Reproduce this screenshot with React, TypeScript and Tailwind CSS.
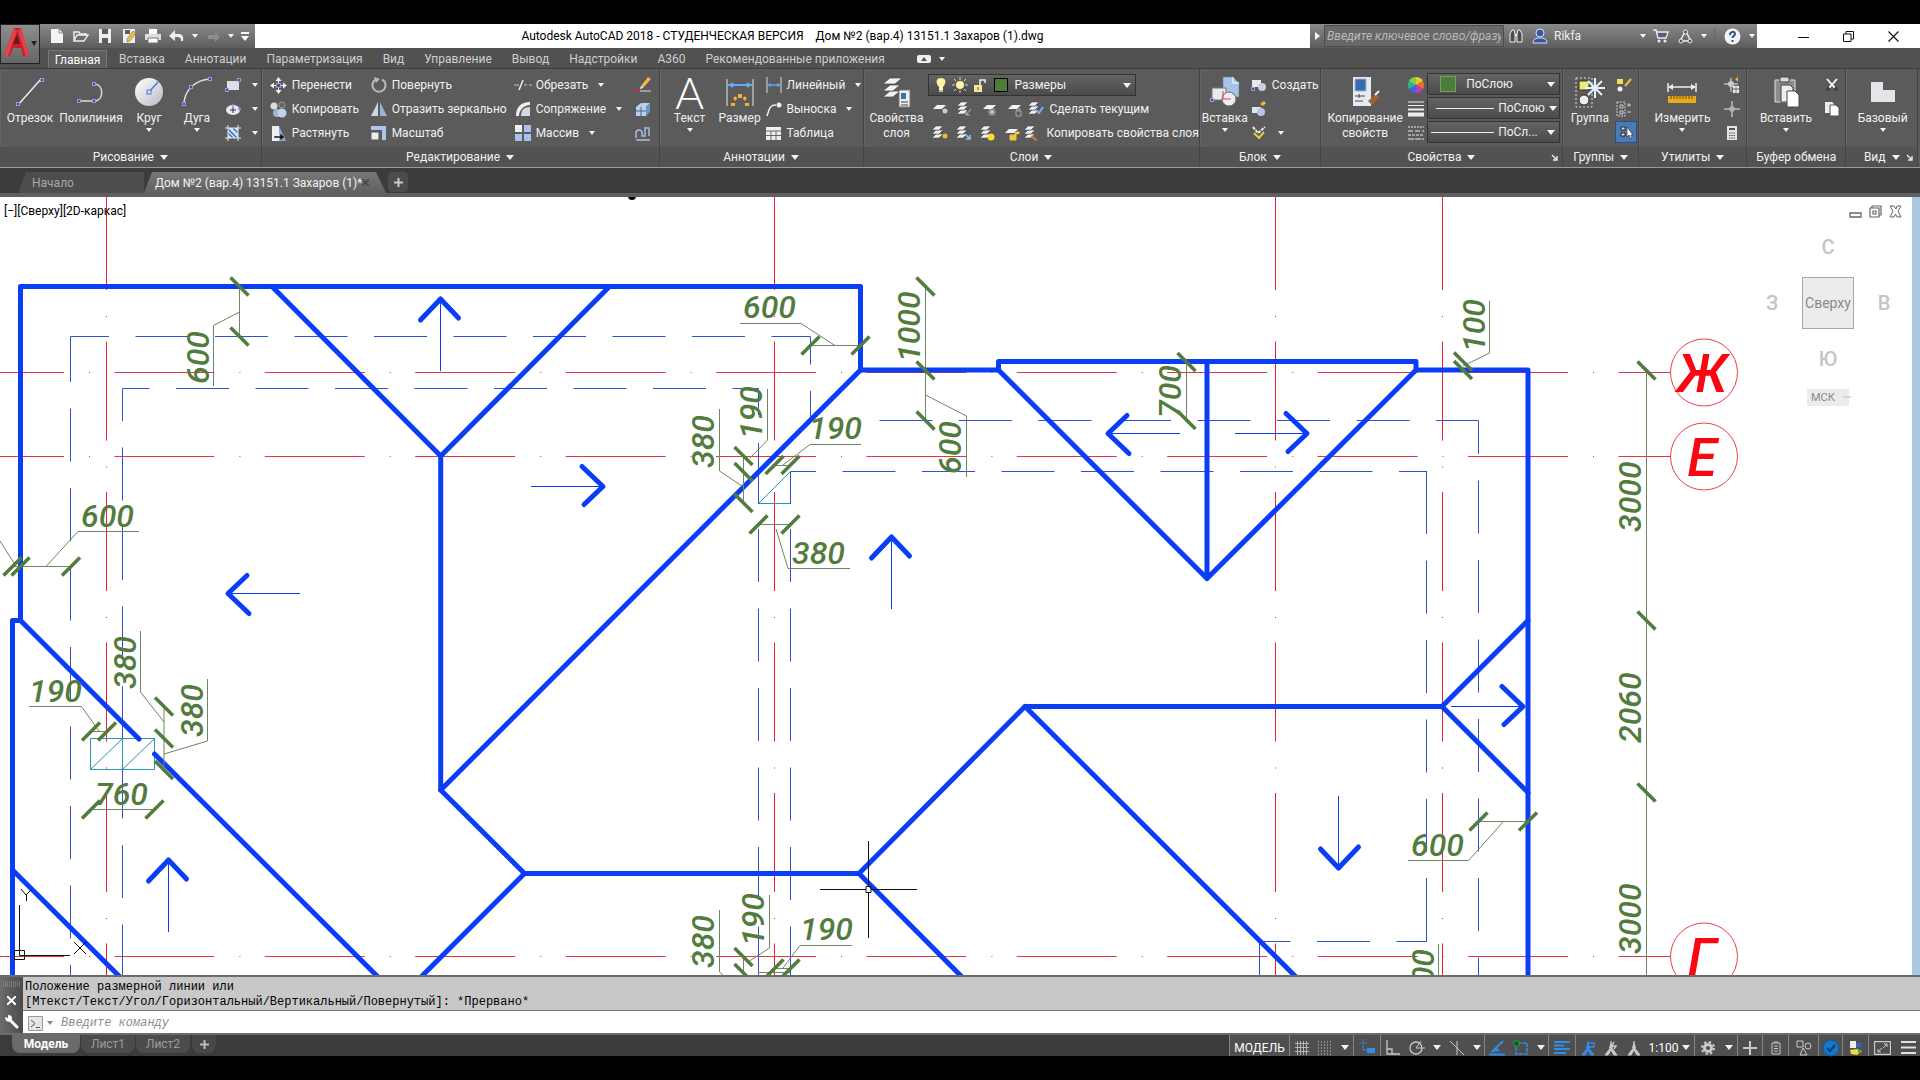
import type { ReactNode } from "react";
import clsx from "clsx";

type Kids = { children?: ReactNode };

/* ---------- small helpers ---------- */

function Svg({ w = 18, h = w, box, children }: Kids & { w?: number; h?: number; box?: string }) {
  return (
    <svg width={w} height={h} viewBox={box ?? `0 0 ${w} ${h}`} fill="none" className="shrink-0" aria-hidden="true">
      {children}
    </svg>
  );
}

function Caret({ big }: { big?: boolean }) {
  return big ? (
    <Svg w={8} h={5}><path d="M0 0h8L4 5z" fill="#f4f4f4" /></Svg>
  ) : (
    <Svg w={6} h={4}><path d="M0 0h6L3 4z" fill="#f4f4f4" /></Svg>
  );
}

function Node({ x, y }: { x: number; y: number }) {
  return <rect x={x - 1.5} y={y - 1.5} width="3" height="3" fill="#4a4f66" stroke="#8f9df0" />;
}

function Stack({ x = 0, y = 0, c = "#f2f2f2" }: { x?: number; y?: number; c?: string }) {
  return (
    <g transform={`translate(${x} ${y})`} fill={c} stroke="#4a4a4a" strokeWidth=".6">
      <path d="M1 13l4-4h7l-4 4z" />
      <path d="M1 9l4-4h7l-4 4z" />
      <path d="M1 5l4-4h7L8 5z" />
    </g>
  );
}

/* ---------- ribbon building blocks ---------- */

function Panel({ title, className, launcher, plain, children }: Kids & { title: string; className: string; launcher?: boolean; plain?: boolean }) {
  return (
    <section className={clsx("flex min-w-0 flex-col overflow-hidden border-r border-[#444] shadow-[inset_1px_0_0_#666]", className)}>
      <div className="flex h-[79px] pt-1 pl-[2px]">{children}</div>
      <button className="relative flex h-5 w-full items-center justify-center gap-[6px] bg-[#525252] whitespace-nowrap">
        {title}
        {!plain && <Caret big />}
        {launcher && (
          <span className="absolute right-1">
            <Svg w={7}><path d="M1 1l4 4M6 2v4H2" stroke="#eee" strokeWidth="1.4" /></Svg>
          </span>
        )}
      </button>
    </section>
  );
}

function Big({ icon, label, w, caret }: { icon: ReactNode; label: string; w: string; caret?: boolean }) {
  return (
    <button className={clsx("flex shrink-0 flex-col items-center", w)}>
      <span className="flex h-[38px] items-center">{icon}</span>
      <span className="text-center leading-[15px] whitespace-pre-line">{label}</span>
      {caret && <span className="pt-[2px]"><Caret /></span>}
    </button>
  );
}

function Col({ className, children }: Kids & { className?: string }) {
  return <div className={clsx("flex shrink-0 flex-col", className)}>{children}</div>;
}

function Row({ icon, label, caret }: { icon: ReactNode; label?: string; caret?: boolean }) {
  return (
    <button aria-label={label ?? "Инструмент"} className="flex h-6 items-center gap-1 whitespace-nowrap">
      <span className="flex w-[18px] justify-center">{icon}</span>
      {label && <span>{label}</span>}
      {caret && <span className="pl-[6px]"><Caret /></span>}
    </button>
  );
}

/* ---------- icons ---------- */

const lineIcon = <Svg w={30}><path d="M3 28L26 2" stroke="#eee" strokeWidth="1.5" /><Node x={3} y={27} /><Node x={27} y={3} /></Svg>;
const plineIcon = <Svg w={32}><path d="M4 25h16c9-1 9-16 0-17" stroke="#ddd" strokeWidth="1.5" /><Node x={4} y={25} /><Node x={19} y={25} /><Node x={19} y={8} /></Svg>;
const circleIcon = (
  <Svg w={30}>
    <defs><linearGradient id="disc" x1="0" y1="0" x2="1" y2="1"><stop stopColor="#fff" /><stop offset="1" stopColor="#b9bcc4" /></linearGradient></defs>
    <circle cx="15" cy="15" r="14" fill="url(#disc)" />
    <path d="M15 15l9-10" stroke="#4a7be0" strokeWidth="1.5" />
    <rect x="13" y="13" width="4" height="4" fill="#dde" stroke="#5570d8" />
  </Svg>
);
const arcIcon = <Svg w={32}><path d="M3 29C3 14 14 4 29 3" stroke="#ddd" strokeWidth="1.5" /><Node x={3} y={28} /><Node x={10} y={11} /><Node x={29} y={3} /></Svg>;
const rectIcon = <Svg w={16}><rect x="2" y="4" width="12" height="9" fill="#dcdfe8" /><Node x={2} y={13} /><Node x={14} y={3} /></Svg>;
const ellipseIcon = <Svg w={16}><ellipse cx="8" cy="9" rx="7" ry="5" fill="#e8eaf0" /><path d="M5 9h6M8 6v6" stroke="#333" /><circle cx="8" cy="4" r="1.5" fill="#88f" /><circle cx="14.500" cy="8" r="1.500" fill="#88f" /></Svg>;
const hatchIcon = <Svg w={16}><rect x="3" y="3" width="10" height="10" fill="#cfe3ff" /><path d="M3 8l5 5M3 4l9 9M8 3l5 5" stroke="#2a63b8" strokeWidth="1.2" /><path d="M3 0v16M13 0v16M0 3h16M0 13h16" stroke="#e8e8e8" /></Svg>;
const moveIcon = <Svg w={17}><path d="M8.500 0l3 4h-6zM8.500 17l3-4h-6zM0 8.500l4-3v6zM17 8.500l-4-3v6z" fill="#f2f2f2" /><path d="M8.500 4v9M4 8.500h9" stroke="#f2f2f2" /><rect x="6.500" y="6.500" width="4" height="4" fill="#556" stroke="#8f9df0" /></Svg>;
const copyIcon = <Svg w={17}><circle cx="4" cy="5" r="3.500" fill="#ddd" /><circle cx="12" cy="4" r="3" fill="#666" stroke="#999" /><circle cx="7" cy="12" r="4" fill="#aab4c8" /><circle cx="12" cy="12" r="4.500" fill="#bcd3ef" /></Svg>;
const stretchIcon = <Svg w={17}><path d="M2 1h7v15H2z" fill="#eee" /><path d="M9 1l7 15H9z" fill="#7fa8dd" /><path d="M4 11h6V8l5 4-5 4v-3H4z" fill="#111" stroke="#eee" strokeWidth=".5" /></Svg>;
const rotateIcon = <Svg w={16}><path d="M5 2.500A6.500 6.500 0 1 0 11 2.500" stroke="#b8b8b8" strokeWidth="2" /><path d="M3 0l6 2-4 4z" fill="#b8b8b8" /></Svg>;
const mirrorIcon = <Svg w={16}><path d="M7 1v14H0z" fill="#cfd5de" /><path d="M9 1v14h7z" fill="#98b3d8" /></Svg>;
const scaleIcon = <Svg w={16}><path d="M0 1h15v14h-4V5H0z" fill="#a9c6ee" /><path d="M0 7h8v8H0z" fill="#eee" stroke="#555" /></Svg>;
const trimIcon = <Svg w={18}><path d="M0 9h5M10 9h3M15 9h3" stroke="#b8c6da" /><path d="M5 14L9 4" stroke="#eee" strokeWidth="1.500" /></Svg>;
const filletIcon = <Svg w={16}><path d="M1 15C1 6 6 1 15 1v3C9 4 4 9 4 15z" fill="#eee" /><path d="M6 15C6 9 9 6 15 6v9z" fill="#d5d8df" /></Svg>;
const arrayIcon = <Svg w={16}><path d="M0 0h7v7H0z" fill="#eee" /><path d="M9 0h7v7H9zM0 9h7v7H0zM9 9h7v7H9z" fill="#a6c1ea" /></Svg>;
const eraseIcon = <Svg w={16}><path d="M6 9l7-9 3 2-8 9z" fill="#f0b840" /><path d="M6 9l2 2-3 1z" fill="#fff" /><path d="M0 14h4" stroke="#d22" strokeWidth="2" /><path d="M5 14h11" stroke="#ddd" /></Svg>;
const explodeIcon = <Svg w={16}><path d="M1 6l5-4h9l-4 4zM1 6h10v9H1z" fill="#b8d0ee" /><path d="M11 6l4-4v9l-4 4z" fill="#6e93c8" /><path d="M6 6v9M1 10h10" stroke="#567" /></Svg>;
const offsetIcon = <Svg w={16}><path d="M1 13V8a3 3 0 0 1 6 0v3h3V3h4v8" stroke="#a9bce0" strokeWidth="1.500" /><path d="M1 15h14" stroke="#eee" /></Svg>;
const textIcon = <span className="font-[Lato,sans-serif] text-[44px] leading-8 font-light text-white">A</span>;
const dimIcon = <Svg w={30}><path d="M2 2v27M28 2v27" stroke="#e5e5e5" /><path d="M3 8h24" stroke="#62aaf4" strokeWidth="2" /><path d="M3 8l5-3v6zM27 8l-5-3v6z" fill="#62aaf4" /><g fill="#f3b13a"><path d="M13 17h4v4h-4z" /><path d="M8 21l3-2 1 3-2 2zM22 21l-3-2-1 3 2 2zM6 26h4v3H6zM20 26h4v3h-4z" /></g></Svg>;
const linearIcon = <Svg w={16}><path d="M1 0v16M15 0v16" stroke="#ddd" /><path d="M2 8h12" stroke="#5da2ee" strokeWidth="1.500" /><path d="M1 8l4-2v4zM15 8l-4-2v4z" fill="#5da2ee" /></Svg>;
const leaderIcon = <Svg w={16}><path d="M1 15l2-6c1-4 3-5 7-5" stroke="#eee" strokeWidth="1.500" /><circle cx="13" cy="4" r="2.500" fill="#eee" /></Svg>;
const tableIcon = <Svg w={15}><path d="M0 1h15v13H0z" fill="#eee" /><path d="M0 5h15M0 9.500h15M5 5v9M10 5v9" stroke="#666" /></Svg>;
const layerPropsIcon = (
  <Svg w={30} h={32}>
    <g fill="#f2f2f2" stroke="#444" strokeWidth=".7"><path d="M1 21l7-6h10l-7 6z" /><path d="M1 15l7-6h10l-7 6z" /><path d="M1 8l7-6h12l-7 6z" /></g>
    <path d="M17 14h11v17H17z" fill="#eee" stroke="#777" />
    <path d="M19 17h5v6h-5z" fill="#3c6fae" /><path d="M19 26h7M19 29h7" stroke="#444" />
  </Svg>
);
const insertIcon = <Svg w={30} h={32}><path d="M13 1h10l6 6v14H13z" fill="#a8c3e8" stroke="#587" strokeWidth=".6" /><path d="M23 1v6h6" stroke="#fff" /><path d="M2 12h14v12H2z" fill="#e9e9ee" stroke="#777" /><circle cx="19" cy="23" r="7" fill="#ececf2" stroke="#667" /><path d="M13 15v8h8" stroke="#d44" /><Node x={2} y={24} /></Svg>;
const matchIcon = <Svg w={30} h={32}><path d="M3 1h18v29H3z" fill="#e6eaf2" /><path d="M5 3h11v12H5z" fill="#3a6cab" stroke="#9bc" /><path d="M5 20h10M9 18v4M5 25h8" stroke="#445" /><path d="M18 25l8-7 3 3-7 8z" fill="#a7632f" /><path d="M25 19l4-4" stroke="#eee" strokeWidth="2" /></Svg>;
const groupIcon = <Svg w={32}><path d="M2 2h16v29H2z" stroke="#ddd" strokeDasharray="2 2" /><path d="M5 5h10v9H5z" fill="#f0ec72" stroke="#333" /><circle cx="10" cy="24" r="5" fill="#eee" stroke="#333" /><g stroke="#e4f3ff" strokeWidth="2"><path d="M21 2v20M11 12h20M14 5l14 14M28 5L14 19" /></g></Svg>;
const measureIcon = <Svg w={30}><path d="M1 6v9M29 6v9M2 10h26" stroke="#eee" strokeWidth="1.500" /><path d="M1 10l5-3v6zM29 10l-5-3v6z" fill="#eee" /><path d="M1 19h28v7H1z" fill="#e9a91f" /><path d="M4 19v3M7 19v3M10 19v3M13 19v3M16 19v3M19 19v3M22 19v3M25 19v3" stroke="#6b4a05" /></Svg>;
const pasteIcon = <Svg w={28} h={32}><path d="M3 4h20v22H3z" fill="#8b8b8b" stroke="#ddd" /><path d="M8 1h9v5H8z" fill="#ddd" stroke="#444" /><path d="M9 9h9l3 3v14H9z" fill="#eee" stroke="#444" /><path d="M15 15h8l4 4v12H15z" fill="#fff" stroke="#444" /></Svg>;
const baseIcon = <Svg w={28}><path d="M2 4h12v8h12v12H2z" fill="#e4e5e8" /></Svg>;
const wheelIcon = <Svg w={16}><path d="M8 8V0a8 8 0 0 1 7 4z" fill="#e8c832" /><path d="M8 8l7-4a8 8 0 0 1 0 8z" fill="#e2732e" /><path d="M8 8l7 4a8 8 0 0 1-7 4z" fill="#c23ab0" /><path d="M8 8v8a8 8 0 0 1-7-4z" fill="#3f62dd" /><path d="M8 8l-7 4a8 8 0 0 1 0-8z" fill="#2faf9b" /><path d="M8 8L1 4a8 8 0 0 1 7-4z" fill="#7fd046" /></Svg>;
const weightsIcon = <Svg w={16}><path d="M0 1h16M0 4.500h16" stroke="#eee" /><path d="M0 8.500h16" stroke="#eee" strokeWidth="2" /><path d="M0 13.500h16" stroke="#eee" strokeWidth="4" /></Svg>;
const typesIcon = <Svg w={16}><path d="M0 2h16" stroke="#eee" strokeDasharray="2 1" /><path d="M0 6h16" stroke="#eee" strokeDasharray="5 2" /><path d="M0 10h16" stroke="#eee" strokeDasharray="3 1" /><path d="M0 14h16" stroke="#eee" strokeDasharray="6 1" /></Svg>;

function LayerIcon({ badge, one }: { badge: ReactNode; one?: boolean }) {
  return (
    <Svg w={16}>
      {one ? <path d="M1 8l4-4h9l-4 4z" fill="#f2f2f2" /> : <Stack x={-1} />}
      {badge}
    </Svg>
  );
}

const layerRow1 = [
  <LayerIcon one badge={<circle cx="13" cy="10" r="2.500" fill="#ccc" />} />,
  <LayerIcon badge={<path d="M14 8l-5 6m0-4v4h4" stroke="#bbb" />} />,
  <LayerIcon one badge={<path d="M10 7v8M6 11h8M7 8l6 6M13 8l-6 6" stroke="#b8d4ff" />} />,
  <LayerIcon one badge={<path d="M9 10h5v5H9zM10 10V8h3v2" stroke="#aaa" />} />,
];
const layerRow2 = [
  <LayerIcon badge={<circle cx="13" cy="11" r="2.500" fill="#f6b23a" />} />,
  <LayerIcon badge={<path d="M9 9l5 5m0-4v4h-4" stroke="#9cc4f5" strokeWidth="1.500" />} />,
  <LayerIcon badge={<circle cx="11" cy="12" r="3.500" fill="#ffd83a" />} />,
  <LayerIcon one badge={<path d="M6 10h6v5H6zM11 10V7h4v2" fill="#eec73a" stroke="#eec73a" />} />,
];

/* ---------- title bar ---------- */

const quick = [
  <Svg w={16}><path d="M2 1h8l4 4v10H2z" fill="#f4f4f4" /><path d="M10 1v4h4" stroke="#888" /></Svg>,
  <Svg w={16}><path d="M1 13V4h5l1 2h6v2" stroke="#eee" strokeWidth="1.500" /><path d="M1 13l3-6h11l-4 6z" stroke="#eee" strokeWidth="1.300" /></Svg>,
  <Svg w={16}><path d="M2 1h12v14H2z" fill="#eee" /><path d="M5 1h6v5H5zM5 10h6v5H5z" fill="#5d5d5d" /></Svg>,
  <Svg w={16}><path d="M2 1h12v14H2z" fill="#eee" /><path d="M4 2h5v4H4z" fill="#5d5d5d" /><path d="M6 11l6-8 3 2-6 8-3 1z" fill="#f0bb35" stroke="#666" strokeWidth=".5" /></Svg>,
  <Svg w={16}><path d="M4 1h8v5H4z" fill="#fff" /><path d="M0 6h16v6H0z" fill="#ddd" /><path d="M3 10h10v5H3z" fill="#fff" stroke="#777" /></Svg>,
  <Svg w={16}><path d="M6 2v4h4c3 0 5 2 4 7h-2c0-3-1-4-3-4H6v4L0 8z" fill="#eee" /></Svg>,
];

function TitleBar() {
  return (
    <div className="flex h-6 bg-white text-black">
      <div className="flex w-[215px] shrink-0 items-center bg-gradient-to-b from-[#8a8a8a] to-[#5c5c5c] pl-[5px]">
        {quick.map((icon, i) => (
          <button key={i} aria-label="Быстрый доступ" className="flex w-6 justify-center">{icon}</button>
        ))}
        <button aria-label="Список отмены" className="flex w-3 justify-center"><Caret /></button>
        <button aria-label="Повторить" className="flex w-6 justify-center">
          <Svg w={14}><path d="M9 3v3H2v4h7v3l5-5z" fill="#8c8c8c" /></Svg>
        </button>
        <button aria-label="Список повтора" className="flex w-3 justify-center"><Caret /></button>
        <button aria-label="Настройка" className="flex w-4 justify-center"><Svg w={8} h={9}><path d="M0 0h8v2H0zM0 4h8L4 9z" fill="#fff" /></Svg></button>
      </div>
      <h1 className="flex min-w-0 flex-1 items-center justify-center gap-3 overflow-hidden whitespace-nowrap">
        <span>Autodesk AutoCAD 2018 - СТУДЕНЧЕСКАЯ ВЕРСИЯ</span>
        <span>Дом №2 (вар.4) 13151.1 Захаров (1).dwg</span>
      </h1>
      <div className="flex shrink-0 items-center bg-gradient-to-b from-[#8a8a8a] to-[#5c5c5c] text-[#eee]">
        <button aria-label="Свернуть поиск" className="flex w-[14px] justify-center"><Svg w={5} h={8}><path d="M0 0l5 4-5 4z" fill="#fff" /></Svg></button>
        <input aria-label="Поиск" placeholder="Введите ключевое слово/фразу" className="h-[22px] w-[180px] border border-[#4c4c4c] bg-[#686868] px-[2px] italic placeholder:text-[#b9b9b9]" />
        <button aria-label="Найти" className="flex w-6 justify-center">
          <Svg w={16}><path d="M2 14V6l2-4h2l1 4v8zM9 14V6l1-4h2l2 4v8z" fill="#4c4c4c" stroke="#eee" /><path d="M7 7h2" stroke="#eee" strokeWidth="2" /></Svg>
        </button>
        <button className="flex w-[118px] items-center gap-[6px] pl-1">
          <Svg w={16}><circle cx="8" cy="5" r="4" fill="#3559a8" stroke="#dde" /><path d="M1 15c0-4 3-5 7-5s7 1 7 5z" fill="#3559a8" stroke="#dde" /></Svg>
          <span className="flex-1 text-left">Rikfa</span>
          <Caret />
        </button>
        <button aria-label="Магазин" className="flex w-[26px] justify-center pl-1"><Svg w={16}><path d="M0 2h3l2 8h8l2-6H4" stroke="#e8e8e8" strokeWidth="1.500" /><path d="M5 6h9M5 8h8" stroke="#3d4f7d" /><circle cx="6" cy="13" r="1.500" fill="#eee" /><circle cx="12" cy="13" r="1.500" fill="#eee" /></Svg></button>
        <button aria-label="Autodesk" className="flex w-[42px] items-center gap-2 pl-[6px]"><Svg w={15}><path d="M7.500 2L13 12H2z" stroke="#eee" strokeWidth="1.500" /><circle cx="7.500" cy="3" r="2" fill="#456" stroke="#eee" /><circle cx="3" cy="12" r="2" fill="#456" stroke="#eee" /><circle cx="12" cy="12" r="2" fill="#456" stroke="#eee" /></Svg><Caret /></button>
        <button aria-label="Справка" className="flex w-[43px] items-center gap-2 border-l border-[#666] pl-[9px]">
          <Svg w={17}><circle cx="8.500" cy="8.500" r="8" fill="#f4f4f4" /><path d="M6 7c0-4 5-4 5-1 0 2-2.500 2-2.500 4M8.500 12v2" stroke="#2d4f96" strokeWidth="2" /></Svg>
          <Caret />
        </button>
      </div>
      <div className="flex w-[163px] shrink-0 items-center">
        <button aria-label="Свернуть" className="ml-6 flex w-[45px] justify-center"><Svg w={11}><path d="M0 6.500h11" stroke="#111" /></Svg></button>
        <button aria-label="Развернуть" className="flex w-[45px] justify-center"><Svg w={11}><path d="M.5 3h7.500v7.500H.5zM3 3V.5h7.500V8H8" stroke="#111" /></Svg></button>
        <button aria-label="Закрыть" className="flex w-[45px] justify-center"><Svg w={11}><path d="M.5.5l10 10M10.500.5l-10 10" stroke="#111" strokeWidth="1.200" /></Svg></button>
      </div>
    </div>
  );
}

const menu = ["Вставка", "Аннотации", "Параметризация", "Вид", "Управление", "Вывод", "Надстройки", "A360", "Рекомендованные приложения"];

function Header() {
  return (
    <header className="flex bg-[#515151]">
      <button aria-label="Меню приложения" className="flex h-10 w-10 shrink-0 items-center justify-center border border-[#222] bg-gradient-to-b from-[#8e8e8e] to-[#666]">
        <Svg w={38}>
          <path d="M13 3h7l8 28h-6l-2-8h-8l-3 8H3z" fill="#c8202c" />
          <path d="M16 9l-4 10h7z" fill="#6b1a20" />
          <path d="M13 3L3 31h4L16 6zM20 3l8 28h-3L17 6z" fill="#e8414c" />
          <path d="M30 16h6l-3 5z" fill="#222" />
        </Svg>
      </button>
      <div className="min-w-0 flex-1">
        <TitleBar />
        <nav className="flex h-5 items-end pl-2 text-[#cfcfcf]">
          <button className="h-[18px] w-[59px] border border-b-0 border-[#777] bg-[#5e5e5e] leading-4 text-white">Главная</button>
          <div className="flex h-[18px] gap-5 pl-3 leading-4 whitespace-nowrap">
            {menu.map((m) => <button key={m}>{m}</button>)}
          </div>
          <button aria-label="Свернуть ленту" className="flex h-[18px] items-center gap-2 pl-8">
            <Svg w={14} h={8}><rect width="14" height="8" rx="2" fill="#eee" /><path d="M4 6l3-4 3 4z" fill="#555" /></Svg>
            <Caret />
          </button>
        </nav>
      </div>
    </header>
  );
}

/* ---------- ribbon ---------- */

function Drop({ children, label }: Kids & { label: string }) {
  return (
    <button aria-label={label} className="flex h-[22px] w-full items-center border border-[#333] bg-gradient-to-b from-[#646464] to-[#4b4b4b] pr-1">
      {children}
      <span className="ml-auto shrink-0 pl-1"><Caret big /></span>
    </button>
  );
}

function Ribbon() {
  return (
    <div className="flex h-[100px] border-t border-b border-t-[#3d3d3d] border-b-[#999] bg-[#5b5b5b] pr-[2px] text-[#f1f1f1]">
      <Panel title="Рисование" className="flex-[262]">
        <Big icon={lineIcon} label="Отрезок" w="w-[56px]" />
        <Big icon={plineIcon} label="Полилиния" w="w-[66px]" />
        <Big icon={circleIcon} label="Круг" w="w-[50px]" caret />
        <Big icon={arcIcon} label="Дуга" w="w-[46px]" caret />
        <Col className="pl-1">
          <Row icon={rectIcon} caret />
          <Row icon={ellipseIcon} caret />
          <Row icon={hatchIcon} caret />
        </Col>
      </Panel>
      <Panel title="Редактирование" className="flex-[399]">
        <Col className="w-[106px] pl-[6px]">
          <Row icon={moveIcon} label="Перенести" />
          <Row icon={copyIcon} label="Копировать" />
          <Row icon={stretchIcon} label="Растянуть" />
        </Col>
        <Col className="w-[144px]">
          <Row icon={rotateIcon} label="Повернуть" />
          <Row icon={mirrorIcon} label="Отразить зеркально" />
          <Row icon={scaleIcon} label="Масштаб" />
        </Col>
        <Col className="w-[120px]">
          <Row icon={trimIcon} label="Обрезать" caret />
          <Row icon={filletIcon} label="Сопряжение" caret />
          <Row icon={arrayIcon} label="Массив" caret />
        </Col>
        <Col>
          <Row icon={eraseIcon} />
          <Row icon={explodeIcon} />
          <Row icon={offsetIcon} />
        </Col>
      </Panel>
      <Panel title="Аннотации" className="flex-[204]">
        <Big icon={textIcon} label="Текст" w="w-[56px]" caret />
        <Big icon={dimIcon} label="Размер" w="w-[44px]" />
        <Col className="pl-[3px]">
          <Row icon={linearIcon} label="Линейный" caret />
          <Row icon={leaderIcon} label="Выноска" caret />
          <Row icon={tableIcon} label="Таблица" />
        </Col>
      </Panel>
      <Panel title="Слои" className="flex-[337]">
        <Big icon={layerPropsIcon} label={"Свойства\nслоя"} w="w-[62px]" />
        <div className="min-w-0 flex-1">
          <div className="flex h-6 w-[208px] items-center">
            <Drop label="Слой">
              <span className="flex items-center gap-[3px] pl-1">
                <Svg w={16}><path d="M8 1c6 0 5 6 2 9v3H6v-3C3 7 2 1 8 1z" fill="#fff2a0" /><path d="M6 13h4v2H6z" fill="#bbb" /></Svg>
                <Svg w={16}><circle cx="8" cy="8" r="4" fill="#fff2a0" /><path d="M8 0v3M8 13v3M0 8h3M13 8h3M2 2l2 2M12 12l2 2M14 2l-2 2M4 12l-2 2" stroke="#d8d8c8" /></Svg>
                <Svg w={16}><path d="M3 8h8v7H3z" fill="#f2e69a" /><path d="M9 8V3h5v3" stroke="#eee" strokeWidth="1.500" /><path d="M7 10v3" stroke="#554" /></Svg>
                <span className="mx-1 h-[14px] w-[14px] border border-black bg-[#4c7d3a]" />
                Размеры
              </span>
            </Drop>
          </div>
          {[layerRow1, layerRow2].map((row, i) => (
            <div key={i} className="flex h-6 items-center whitespace-nowrap">
              {row.map((ic, j) => <button key={j} aria-label="Слой" className="flex w-[25px] justify-center">{ic}</button>)}
              <button className="flex items-center gap-[6px]">
                <LayerIcon badge={i ? <path d="M8 10l6 5-3 1-4-4z" fill="#c87a34" /> : <path d="M8 9l3 3 4-6" stroke="#7cb2f0" strokeWidth="2" />} />
                {i ? "Копировать свойства слоя" : "Сделать текущим"}
              </button>
            </div>
          ))}
        </div>
      </Panel>
      <Panel title="Блок" className="flex-[121]">
        <Big icon={insertIcon} label="Вставка" w="w-[46px]" caret />
        <Col className="pl-[2px]">
          <Row icon={<Svg w={16}><path d="M1 3h9v7H1z" fill="#e8e8ee" /><circle cx="11" cy="10" r="4" fill="#c9cfe0" /><Node x={2} y={12} /></Svg>} label="Создать" />
          <Row icon={<Svg w={16}><path d="M1 6h9v6H1z" fill="#dfe4f0" /><circle cx="10" cy="11" r="4" fill="#b9c6e0" /><path d="M9 3l4-3 2 2-3 3z" fill="#f4b340" /></Svg>} />
          <Row icon={<Svg w={16}><path d="M2 2l5 6 7-6" stroke="#eee" strokeWidth="2" strokeDasharray="3 1" /><path d="M3 8l5 5 5-6" stroke="#d9d24a" strokeWidth="2" /></Svg>} caret />
        </Col>
      </Panel>
      <Panel title="Свойства" className="flex-[242]" launcher>
        <Big icon={matchIcon} label={"Копирование\nсвойств"} w="w-[84px]" />
        <Col>
          <Row icon={wheelIcon} />
          <Row icon={weightsIcon} />
          <Row icon={typesIcon} />
        </Col>
        <div className="flex min-w-0 flex-1 flex-col gap-[2px] px-[2px]">
          <Drop label="Цвет">
            <span className="ml-3 h-4 w-4 border border-[#7a9c6c] bg-[#4c7d3a]" />
            <span className="ml-[10px]">ПоСлою</span>
          </Drop>
          <Drop label="Вес линий">
            <span className="ml-2 h-px w-[58px] shrink-0 bg-[#eee]" />
            <span className="ml-1">ПоСлою</span>
          </Drop>
          <Drop label="Тип линий">
            <span className="ml-[3px] h-px w-[63px] shrink-0 bg-[#eee]" />
            <span className="ml-1">ПоСл...</span>
          </Drop>
        </div>
      </Panel>
      <Panel title="Группы" className="flex-[76]">
        <Big icon={groupIcon} label="Группа" w="w-[50px]" />
        <Col>
          <Row icon={<Svg w={16}><path d="M1 2h6v5H1z" fill="#e8e25c" /><circle cx="4" cy="12" r="2.500" fill="#eee" /><path d="M9 9l6-7" stroke="#f0c040" strokeWidth="2" /></Svg>} />
          <Row icon={<Svg w={16}><path d="M1 1h8v14H1z" stroke="#ccc" strokeDasharray="2 1" /><path d="M4 4h3v3H4zM4 10h3v3H4zM11 4h4M13 2v4M11 11h4" stroke="#ccc" /></Svg>} />
          <button aria-label="Выбор группы" aria-pressed="true" className="flex h-[22px] w-[22px] items-center justify-center border border-[#2c4f85] bg-[#4a79b8]"><Svg w={16}><path d="M3 3h4v3H3zM3 9h4v3H3z" fill="#dfe8a0" stroke="#223" /><path d="M9 3v10l2-2 2 4 1-1-1-3h2z" fill="#fff" stroke="#222" strokeWidth=".6" /></Svg></button>
        </Col>
      </Panel>
      <Panel title="Утилиты" className="flex-[107]">
        <Big icon={measureIcon} label="Измерить" w="w-[82px]" caret />
        <Col>
          <Row icon={<Svg w={16}><path d="M7 1v14M0 7h14" stroke="#eee" /><path d="M5 5h4v4H5z" stroke="#eee" /><path d="M11 2l3-2v5z" fill="#f6ae2c" /><path d="M9 9h6v7H9z" fill="#eee" /><path d="M9 12h6M12 10v6" stroke="#666" /></Svg>} />
          <Row icon={<Svg w={16}><path d="M8 0v16M0 8h16" stroke="#bbb" strokeWidth="1.500" /><path d="M6 6h4v4H6z" stroke="#bbb" /></Svg>} />
          <Row icon={<Svg w={14}><path d="M2 0h10v14H2z" fill="#e4e4e4" /><path d="M4 2h6v2H4z" fill="#555" /><path d="M4 7h6M4 9.500h6M4 12h6" stroke="#555" strokeDasharray="1.500 .8" /></Svg>} />
        </Col>
      </Panel>
      <Panel title="Буфер обмена" className="flex-[99]" plain>
        <Big icon={pasteIcon} label="Вставить" w="w-[74px]" caret />
        <Col>
          <Row icon={<Svg w={16}><path d="M3 2l8 9M13 2l-8 9" stroke="#fff" strokeWidth="1.800" /><circle cx="4" cy="12" r="1.500" stroke="#333" /><circle cx="12" cy="12" r="1.500" stroke="#333" /></Svg>} />
          <Row icon={<Svg w={16}><path d="M1 1h7l2 2v9H1z" fill="#eee" /><path d="M6 4h6l3 3v8H6z" fill="#fff" stroke="#555" /></Svg>} />
        </Col>
      </Panel>
      <Panel title="Вид" className="flex-[71]" launcher>
        <Big icon={baseIcon} label="Базовый" w="w-full" caret />
      </Panel>
    </div>
  );
}

function DocTabs() {
  return (
    <div className="flex h-[29px] items-start border-b-4 border-[#5f5f5f] bg-[#3b3b3b] pt-1 pl-[18px]">
      <button className="h-[21px] w-[126px] bg-[#4d4d4d] pl-[14px] text-left text-[#a9a9a9] [clip-path:polygon(0_100%,8px_0,100%_0,100%_100%)]">Начало</button>
      <button className="flex h-[21px] w-[242px] items-center bg-gradient-to-b from-[#777] to-[#606060] pl-[11px] whitespace-nowrap text-[#f2f2f2] [clip-path:polygon(0_100%,8px_0,232px_0,100%_100%)]">
        Дом №2 (вар.4) 13151.1 Захаров (1)*
        <span className="ml-auto pr-[18px]"><Svg w={7}><path d="M0 0l7 7M7 0L0 7" stroke="#454545" strokeWidth="1.500" /></Svg></span>
      </button>
      <button aria-label="Новый чертеж" className="ml-[2px] flex h-[20px] w-5 items-center justify-center rounded bg-[#4c4c4c]"><Svg w={9}><path d="M4.500 0v9M0 4.500h9" stroke="#ccc" strokeWidth="2" /></Svg></button>
    </div>
  );
}

/* ---------- drawing ---------- */

const roof = [
  "M860.500 370V286.500H20.500V620.500H12.500V976",
  "M860.500 370H998.500V361.500H1416V370H1528V976",
  "M272.500 287L440.700 456L609 287",
  "M440.700 456V790L524.500 873.500H859L1025 706.500H1442",
  "M860.500 370L440.700 790M524.500 873.500L421 977",
  "M859 873.500L962 977M1025 706.500L1296 977",
  "M998.500 370L1207 578.500L1416 370M1207 361.500V578.500",
  "M1528 620.500L1442 706.500L1528 792.500",
  "M20.500 620.500L139 739M154.500 754L378 977M12.500 870L120 977",
];

// x1, y1, x2, y2, dash offset
const hidden = [
  [70.5, 336.5, 810.5, 336.5, 14.5], [810.5, 336.5, 810.5, 420, 25],
  [70.5, 336.5, 70.5, 976, 7.5], [122.5, 388.5, 758.5, 388.5, 26], [122.5, 388.5, 122.5, 976, 20.5],
  [758.5, 388.5, 758.5, 415, 26], [758.5, 443, 758.5, 504, 0], [758.5, 529, 758.5, 976, 0],
  [790.5, 471.5, 790.5, 504, 0], [790.5, 529, 790.5, 976, 0], [790.5, 471.5, 1427, 471.5, 27.5],
  [1426.5, 471.5, 1426.5, 481, 0], [1426.5, 481, 1426.5, 878, 0], [1426.5, 878, 1426.5, 941.5, 0],
  [1259.5, 941.5, 1426.5, 941.5, 22], [1259.5, 941.5, 1259.5, 976, 0],
  [879.5, 420.5, 1478.5, 420.5, 0], [1478.5, 420.5, 1478.5, 976, 19.5],
];

// tip x, tip y, angle
const arrows = [
  [440.5, 299, 0], [603, 486.5, 90], [228, 593.5, -90], [891.5, 537, 0], [1108, 433.5, -90],
  [1307, 433.5, 90], [168.5, 860, 0], [1523, 706.5, 90], [1338.5, 868, 180],
];

// ticks crossing horizontal dimension lines
const ticksH = [
  [12.5, 566.5], [20.5, 566.5], [71, 566.5], [810.5, 345.5], [860.5, 345.5], [774.5, 465], [790.5, 465],
  [758.5, 524.5], [790.5, 524.5], [1478.5, 821.5], [1528, 821.5], [91, 731.5], [107, 731.5],
  [91, 809.5], [154.500, 809.5], [774.5, 968.5], [790.5, 968.5],
];
// ticks crossing vertical dimension lines
const ticksV = [
  [239.5, 286.5], [239.5, 336.5], [925.5, 286.5], [925.5, 370.5], [925.5, 420.5], [1186.5, 362], [1186.5, 420],
  [743.5, 456], [743.5, 472], [743.5, 503], [1463, 361.5], [1463, 370], [1646.5, 370.5], [1646.5, 620.5],
  [1646.5, 792.5], [164, 706.5], [164, 738.5], [164, 770], [743.5, 957], [743.5, 973],
];

const dimLines = [
  "M239.500 286V337M239.500 312L213.500 325.500V386", "M12 566.500H71M46 566.500L78 531.500H139M0 541L14 563",
  "M810 345.500H860M835 345.500L801 323.500H740", "M925.500 286V420M925.500 395L966.500 416V477",
  "M1186.500 362V420", "M743.500 456V503M750 458L767.500 440V389M743.500 487L719.500 471V409",
  "M774 465.500H790M783 465L810 444.500H861", "M758 524.500H790M776 529L788 568.500H850",
  "M1463 366L1489.500 353V301", "M1646.500 370V976", "M1478 821.500H1528M1503 822L1468.500 860.500H1408",
  "M91 731.500H107M99 731L81.500 706.500H29", "M164 706V770M164 722L140.500 692V631M164 754L207.500 741V679",
  "M91 809.500H154", "M719.500 910V972L724 976M769.500 895V948L748 962M743.500 957V976",
  "M852 945.500H800L783 968M774 968.500H790M758 972.500H790", "M1438.500 944V976",
];

// x, baseline y, label, vertical
const dimTexts: [number, number, string, boolean?][] = [
  [209, 384, "600", true], [81, 527, "600"], [743, 318, "600"], [920, 362, "1000", true], [961, 474, "600", true],
  [1181, 418, "700", true], [762, 439, "190", true], [714, 468, "380", true], [809, 439, "190"], [792, 564, "380"],
  [1485, 352, "100", true], [1641, 532, "3000", true], [1641, 743, "2060", true], [1641, 954, "3000", true],
  [1411, 856, "600"], [29, 702, "190"], [136, 689, "380", true], [203, 737, "380", true], [95, 805, "760"],
  [714, 968, "380", true], [764, 946, "190", true], [800, 940, "190"], [1434, 1002, "600", true],
];

function Drawing() {
  return (
    <svg viewBox="0 197 1920 778" preserveAspectRatio="xMinYMin slice" fill="none" className="absolute inset-0 h-full w-full" role="img" aria-label="План кровли">
      <g stroke="#e23545" strokeDasharray="100 25 1 24.400">
        {[372.5, 456.5, 956.5].map((y) => <path key={y} d={`M-36 ${y}H1671`} />)}
      </g>
      <g stroke="#ee1c2e" strokeDasharray="99 26 1 24.500">
        {[106.5, 774.5, 1275.5, 1442.5].map((x) => <path key={x} d={`M${x} 191V976`} />)}
      </g>
      <g stroke="#2f4fd6" strokeDasharray="53 26.500">
        {hidden.map(([a, b, c, d, off], i) => (
          <path key={i} d={`M${a} ${b}L${c} ${d}`} strokeDashoffset={off} strokeDasharray={Math.abs(d - b) < 64 && a === c && off === 0 ? "none" : undefined} />
        ))}
      </g>
      <g stroke="#2f93b4">
        <path d="M90.500 738.500h64v31h-64zM122.500 738.500v31M90.500 769.500l32-31M122.500 769.500l32-31" />
        <path d="M758.500 503.500h32M758.500 503.500l32-32" />
      </g>
      <g stroke="#0a3ef5" strokeWidth="5" strokeLinejoin="round" strokeLinecap="round">
        {roof.map((d) => <path key={d} d={d} />)}
      </g>
      {arrows.map(([x, y, a], i) => (
        <g key={i} transform={`translate(${x} ${y}) rotate(${a})`} stroke="#0a3ef5">
          <path d="M0 0V72" />
          <path d="M-20 21L0 0L18 19" strokeWidth="5" strokeLinecap="round" strokeLinejoin="round" />
        </g>
      ))}
      <g stroke="#6f8662">{dimLines.map((d) => <path key={d} d={d} />)}</g>
      <g stroke="#527c3e" strokeWidth="3.500">
        {ticksH.map(([x, y], i) => <path key={i} d={`M${x - 9} ${y + 9}l18-18`} />)}
        {ticksV.map(([x, y], i) => <path key={i} d={`M${x - 9} ${y - 9}l18 18`} />)}
      </g>
      <g fill="#527c3e" className="font-[Roboto,sans-serif] text-[32px] font-medium italic">
        {dimTexts.map(([x, y, t, v], i) => (
          <text key={i} transform={`translate(${x} ${y})${v ? " rotate(-90)" : ""}`}>{t}</text>
        ))}
      </g>
      <g stroke="#f03a48">
        {[372.5, 456.5, 956.5].map((y) => <circle key={y} cx="1704" cy={y} r="33.500" />)}
      </g>
      <g fill="#fb0510" textAnchor="middle" className="font-[Roboto,sans-serif] text-[54px] font-medium italic">
        <text x="1702" y="392">Ж</text>
        <text x="1702" y="476">Е</text>
        <text x="1702" y="976">Г</text>
      </g>
      <g stroke="#111">
        <path d="M19.500 905V955.500H70M14.500 950.500h10v9h-10zM21 889l5 6 6-6M26.500 895v6M74 942l12 12M86 942l-12 12" />
        <path d="M820 889.500h46M871 889.500h46M868.500 841v46M868.500 893v45M866 886.500h5v6h-5z" />
      </g>
      <circle cx="632" cy="196" r="4" fill="#000" />
    </svg>
  );
}

function Canvas() {
  return (
    <main className="relative min-h-0 flex-1 overflow-hidden border-r-8 border-[#a9c8df] bg-white">
      <Drawing />
      <div className="absolute top-[6px] left-1 flex leading-4 text-black">
        <button>[−]</button><button>[Сверху]</button><button>[2D-каркас]</button>
      </div>
      <div className="absolute top-2 right-[10px] flex items-center gap-[7px]">
        <button aria-label="Свернуть окно"><Svg w={13}><path d="M1 8h11v4H1z" stroke="#666" strokeWidth="1.300" /></Svg></button>
        <button aria-label="Восстановить окно"><Svg w={13}><path d="M1 3h9v9H1zM3 3V1h9v9h-2M4 6h3v3H4z" stroke="#666" strokeWidth="1.200" /></Svg></button>
        <button aria-label="Закрыть окно"><Svg w={13}><path d="M1 1h4l2 3 1-3h4L9 6l3 6H8L6.500 9 5 12H1l3-6z" stroke="#666" /></Svg></button>
      </div>
      <div className="absolute top-[38px] right-[13px] grid w-[142px] grid-cols-[30px_1fr_30px] place-items-center text-xl leading-6 font-medium text-[#c4c4c4]">
        <button className="col-span-3">С</button>
        <button>З</button>
        <button className="my-[18px] h-[52px] w-[52px] border border-[#a8a8a8] bg-[#ececec] text-sm font-normal text-[#8a8a8a]">Сверху</button>
        <button>В</button>
        <button className="col-span-3">Ю</button>
        <button className="col-span-3 mt-[18px] flex h-[17px] w-[42px] items-center gap-2 bg-[#ebebee] pl-1 text-[11px] font-normal text-[#888]">МСК<Svg w={8} h={3}><path d="M0 1h8" stroke="#bbb" /></Svg></button>
      </div>
    </main>
  );
}

/* ---------- command line and status ---------- */

function CommandLine() {
  return (
    <div className="flex h-[60px] border-y-2 border-[#6b6b6b]">
      <div className="flex w-[23px] shrink-0 flex-col items-center justify-between bg-gradient-to-r from-[#6c6c6c] to-[#4b4b4b] py-1">
        <Svg w={18} h={6}><path d="M0 1h18M0 3h18M0 5h18" stroke="#999" strokeDasharray="1 1" /></Svg>
        <button aria-label="Закрыть"><Svg w={9}><path d="M0 0l9 9M9 0L0 9" stroke="#fff" strokeWidth="2" /></Svg></button>
        <button aria-label="Настройка"><Svg w={15}><path d="M5 5l8 8" stroke="#fff" strokeWidth="3" strokeLinecap="round" /><path d="M1 3l3 1V1c4 0 5 3 3 6-3 2-6 0-6-4z" fill="#fff" /></Svg></button>
      </div>
      <div className="flex min-w-0 flex-1 flex-col font-['Liberation_Mono',monospace]">
        <div className="h-[34px] overflow-hidden border-b border-[#777] bg-[#c8c8c8] pt-[3px] pl-[2px] leading-[15px] whitespace-pre text-black">
          {"Положение размерной линии или\n[Мтекст/Текст/Угол/Горизонтальный/Вертикальный/Повернутый]: *Прервано*"}
        </div>
        <label className="flex flex-1 items-center gap-1 bg-white pt-[2px] pl-[5px]">
          <Svg w={15}><path d="M.5.5h14v14H.5z" fill="#e4e4ea" stroke="#999" /><path d="M3 4l4 3.500L3 11M8 11.500h4" stroke="#555" /></Svg>
          <Svg w={6} h={4}><path d="M0 0h6L3 4z" fill="#888" /></Svg>
          <input aria-label="Команда" placeholder="Введите команду" className="ml-1 min-w-0 flex-1 italic outline-none placeholder:text-[#8e8e8e]" />
        </label>
      </div>
    </div>
  );
}

function Annot({ c, x }: { c: string; x?: string }) {
  return <Svg w={16}><path d="M8 1v6L2 15h3l3-5 3 5h3L8 7" fill={c} stroke={c} /><path d="M8 1l2 7H6z" fill={c} />{x && <path d={x} stroke={c} strokeWidth="1.500" />}</Svg>;
}

const caret = <Caret big />;
const G = "#c9c9c9";
const B = "#2f8df0";
// width class, whether a divider stands on the left, drawing
const status: [string, boolean, ReactNode][] = [
  ["w-6", true, <Svg w={14}><path d="M2.500 0v14M5.500 0v14M8.500 0v14M11.500 0v14M0 2.500h14M0 6.500h14M0 10.500h14" stroke={G} strokeWidth=".8" /></Svg>],
  ["w-6", false, <Svg w={14}><path d="M0 1h14M0 4h14M0 7h14M0 10h14M0 13h14" stroke={G} strokeDasharray="1 2" /></Svg>],
  ["w-4", false, caret],
  ["w-[27px]", true, <Svg w={17}><path d="M4 0v8M0 4h8" stroke={B} strokeDasharray="2 1" /><path d="M8 9h8v5H8z" fill={B} /><path d="M4 8v3h4" stroke={B} /></Svg>],
  ["w-[25px]", true, <Svg w={16}><path d="M2 0v14h13M2 9h5v5" stroke={G} strokeWidth="1.300" /></Svg>],
  ["w-6", false, <Svg w={16}><circle cx="7" cy="8" r="6" stroke={G} strokeWidth="1.300" /><path d="M7 8h9M7 8l5-7" stroke={G} /></Svg>],
  ["w-4", false, caret],
  ["w-6", false, <Svg w={16}><path d="M1 1l14 14M8 1v14" stroke={G} /></Svg>],
  ["w-[15px]", false, caret],
  ["w-[25px]", true, <Svg w={16}><path d="M14 1L3 12M0 14.500h16" stroke={B} strokeWidth="2" /><path d="M2 12l9-1-4-4z" fill={B} /></Svg>],
  ["w-6", false, <Svg w={16}><path d="M4 3h10v11H3V6" stroke={B} strokeWidth="1.500" strokeDasharray="4 1" /><path d="M1 1h5v5H1z" fill="#0f5a22" stroke="#1f9a40" /></Svg>],
  ["w-[15px]", false, caret],
  ["w-[27px]", true, <Svg w={16}><path d="M0 2h16M0 5.500h10M0 9h16M0 13h12" stroke={B} strokeWidth="2.200" /></Svg>],
  ["w-6", true, <Annot c={B} x="M9 3h5v4H9" />],
  ["w-6", false, <Annot c={G} x="M11 2l-2 4h4l-2 3" />],
  ["w-[22px]", false, <Annot c={G} />],
];
const statusEnd: [string, boolean, ReactNode][] = [
  ["w-[26px]", true, <Svg w={14}><circle cx="7" cy="7" r="3.500" stroke={G} strokeWidth="3" /><circle cx="7" cy="7" r="6" stroke={G} strokeWidth="2" strokeDasharray="2.500 2.200" /></Svg>],
  ["w-[17px]", false, caret],
  ["w-[25px]", true, <Svg w={14}><path d="M7 0v14M0 7h14" stroke={G} strokeWidth="2" /></Svg>],
  ["w-[26px]", true, <Svg w={14}><path d="M3 2h8v11H3z" stroke={G} /><path d="M5 1h4M5 5h4M5 7.500h4M5 10h4" stroke={G} /></Svg>],
  ["w-[30px]", true, <Svg w={16}><path d="M1 1h6v6H1zM7 8l4 7H4z" stroke={G} /><circle cx="12" cy="6" r="3" stroke={G} /></Svg>],
  ["w-6", true, <Svg w={18}><circle cx="9" cy="9" r="8" fill="#1477c9" stroke="#0d5a9c" /><path d="M5 9l3 3 5-6" stroke="#0a3f75" strokeWidth="2" /></Svg>],
  ["w-[26px]", true, <Svg w={16}><path d="M2 1h6v7H2z" fill="#eee" /><path d="M8 3h5v4H8z" fill="#3a62c8" /><path d="M2 10l7-1 5 2-5 4-6-1z" fill="#e8dc3c" /><path d="M9 8l4 2-2 4z" fill="#38a048" /></Svg>],
  ["w-[28px]", true, <Svg w={17} h={14}><path d="M.5.5h16v13H.5z" stroke={G} strokeWidth="1.300" /><path d="M9 7l4-4M10 3h3v3M8 7l-4 4M4 8v3h3" stroke={G} /></Svg>],
  ["w-6", false, <Svg w={15}><path d="M0 2h15M0 7.500h15M0 13h15" stroke="#e0e0e0" strokeWidth="2" /></Svg>],
];

function Cells({ items }: { items: [string, boolean, ReactNode][] }) {
  return items.map(([w, line, icon], i) => (
    <button key={i} aria-label="Режим" className={clsx("flex h-full shrink-0 items-center justify-center pt-1", w, line && "border-l border-[#858585]")}>{icon}</button>
  ));
}

function Footer() {
  return (
    <footer className="flex h-[21px] justify-between bg-[#3b3b3b] text-[#9c9c9c]">
      <nav className="flex h-[18px] items-center pl-3">
        <button className="h-full w-[68px] rounded-b-lg bg-[#6a6a6a] leading-4 font-bold text-white">Модель</button>
        <button className="ml-px h-full w-[54px] rounded-b-lg bg-[#4c4c4c] leading-4">Лист1</button>
        <button className="ml-px h-full w-[54px] rounded-b-lg bg-[#4c4c4c] leading-4">Лист2</button>
        <button aria-label="Новый лист" className="ml-[2px] flex h-full w-6 items-center justify-center rounded-b-lg bg-[#474747]"><Svg w={9}><path d="M4.500 0v9M0 4.500h9" stroke="#bbb" strokeWidth="2" /></Svg></button>
      </nav>
      <div className="flex items-center bg-[#4f4f4f] text-white">
        <button className="h-full w-[60px] border-l border-[#858585] pt-1 leading-4">МОДЕЛЬ</button>
        <Cells items={status} />
        <button className="flex h-full w-[49px] items-center justify-center gap-1 pt-1 leading-4">1:100 {caret}</button>
        <Cells items={statusEnd} />
      </div>
    </footer>
  );
}

export default function App() {
  return (
    <div className="flex h-screen flex-col bg-black py-6 font-[Roboto,'Open_Sans',sans-serif] text-xs">
      <Header />
      <Ribbon />
      <DocTabs />
      <Canvas />
      <CommandLine />
      <Footer />
    </div>
  );
}
